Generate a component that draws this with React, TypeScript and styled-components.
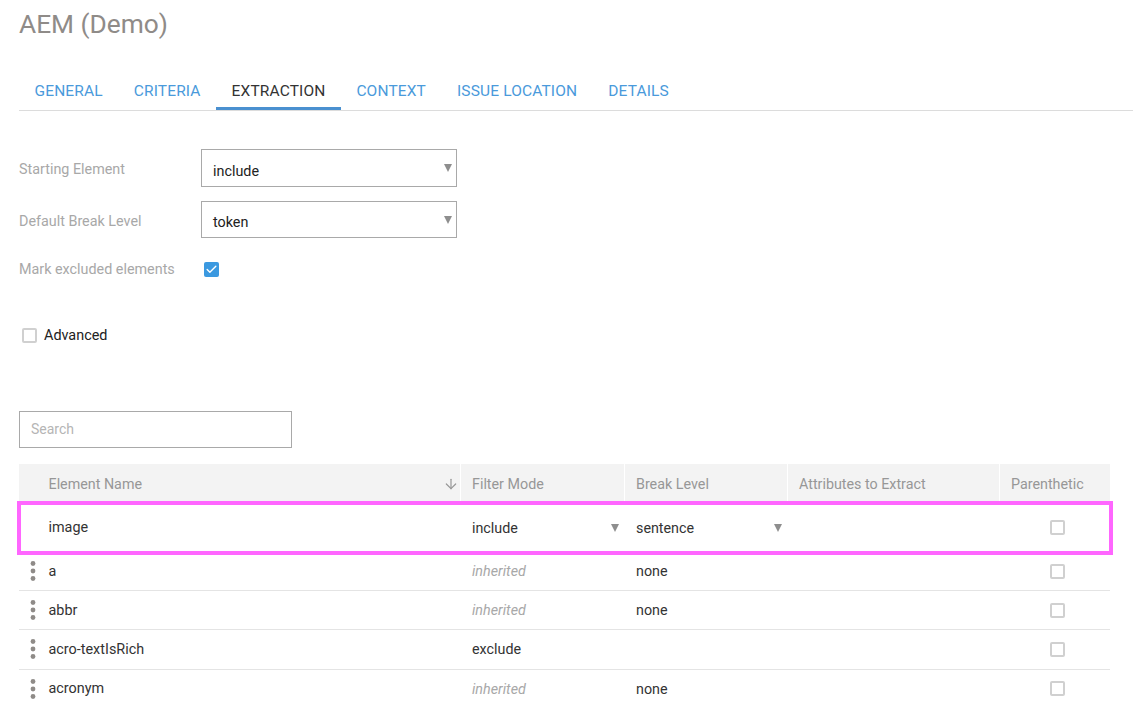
import React from "react";
import styled, { createGlobalStyle } from "styled-components";
import { ArrowDown, Check } from "lucide-react";

const GlobalStyle = createGlobalStyle`
  html, body {
    margin: 0;
    height: 100%;
    overflow: hidden;
    background: #fff;
    font-family: Roboto, "Liberation Sans", sans-serif;
  }
`;

const Page = styled.div`
  padding-left: 19px;
`;

const Title = styled.h1`
  margin: 0;
  height: 48px;
  line-height: 48px;
  font-size: 26.3px;
  font-weight: 400;
  color: #8f8b88;
`;

const Tabs = styled.div`
  display: flex;
  margin-top: 24px;
  height: 38px;
  border-bottom: 1px solid #dcdcdc;
`;

const Tab = styled.div<{ $active?: boolean }>`
  padding: 0 15.5px;
  height: 38px;
  line-height: 39px;
  box-sizing: border-box;
  font-size: 15.5px;
  letter-spacing: 0.14px;
  color: ${(p) => (p.$active ? "#333" : "#4a9adb")};
  border-bottom: 3px solid ${(p) => (p.$active ? "#4a90d0" : "transparent")};
`;

const Form = styled.div`
  display: flex;
  flex-direction: column;
  margin-top: 38px;
`;

const FormRow = styled.div<{ $h: number; $mt?: number }>`
  display: flex;
  align-items: center;
  height: ${(p) => p.$h}px;
  margin-top: ${(p) => p.$mt ?? 0}px;
`;

const Label = styled.div<{ $shift?: number }>`
  width: 182px;
  font-size: 14.35px;
  color: #a8a8a8;
  padding-top: ${(p) => p.$shift ?? 0}px;
  padding-bottom: ${(p) => (p.$shift ? 0 : 1)}px;
`;

const SelectBox = styled.div<{ $pad: number }>`
  position: relative;
  box-sizing: border-box;
  width: 256px;
  height: 100%;
  padding: ${(p) => p.$pad}px 11px 0;
  display: flex;
  align-items: center;
  font-size: 14.35px;
  color: #222;
  border: 1px solid #a9a9a9;
`;

const Caret = styled.span`
  position: absolute;
  right: 4px;
  top: 14px;
  width: 0;
  height: 0;
  border-left: 4.5px solid transparent;
  border-right: 4.5px solid transparent;
  border-top: 8px solid #8e8e8e;
`;

const InlineCaret = styled(Caret)`
  top: 50%;
  margin-top: -4px;
  right: 5px;
`;

const Box = styled.span<{ $checked?: boolean }>`
  box-sizing: border-box;
  display: inline-flex;
  align-items: center;
  justify-content: center;
  flex: none;
  width: 15px;
  height: 15px;
  border-radius: 2px;
  background: ${(p) => (p.$checked ? "#3b99e0" : "#fff")};
  border: ${(p) => (p.$checked ? "none" : "2px solid #d0d0d0")};
  color: #fff;
`;

const MarkCell = styled.div`
  padding-left: 3px;
  display: flex;
`;

const AdvancedRow = styled.div`
  display: flex;
  align-items: center;
  gap: 7px;
  margin-top: 48px;
  padding-left: 3px;
  height: 20px;
  font-size: 14.4px;
  color: #222;
`;

const Search = styled.input`
  display: block;
  box-sizing: border-box;
  width: 273px;
  height: 37px;
  margin-top: 66px;
  padding: 0 11px 2px;
  font: 14px Roboto, sans-serif;
  border: 1px solid #a9a9a9;
  border-radius: 0;
  outline: none;
  &::placeholder {
    color: #b5b5b5;
    opacity: 1;
  }
`;

const columns = "441px 164px 163px 212px 111px";

const Table = styled.div`
  width: 1091px;
  margin-top: 16px;
`;

const HeaderRow = styled.div`
  display: grid;
  grid-template-columns: ${columns};
  height: 39px;
  background: #f3f3f3;
`;

const HeadCell = styled.div<{ $first?: boolean }>`
  display: flex;
  align-items: center;
  justify-content: space-between;
  padding: 0 1px 0 ${(p) => (p.$first ? "29.5px" : "11px")};
  font-size: 14.3px;
  color: #979797;
  border-left: ${(p) => (p.$first ? "none" : "1px solid #fff")};
`;

const Row = styled.div<{ $highlight?: boolean }>`
  position: relative;
  display: grid;
  grid-template-columns: ${columns};
  height: ${(p) => (p.$highlight ? "49px" : "39.2px")};
  box-sizing: border-box;
  border-bottom: ${(p) => (p.$highlight ? "none" : "1px solid #e4e4e4")};
  ${(p) =>
    p.$highlight &&
    `&::after {
      content: "";
      position: absolute;
      inset: -2px -3px -3px -2px;
      border: 4px solid #ff66ff;
      pointer-events: none;
    }`}
`;

const NameCell = styled.div`
  display: flex;
  align-items: center;
  font-size: 14.4px;
  color: #333;
`;

const Handle = styled.div`
  width: 28px;
  margin-right: 1.5px;
  display: flex;
  justify-content: center;
  flex: none;
  color: #8f8b88;
`;

const Cell = styled.div<{ $inherited?: boolean }>`
  position: relative;
  display: flex;
  align-items: center;
  padding-left: 12px;
  font-size: 14.3px;
  font-style: ${(p) => (p.$inherited ? "italic" : "normal")};
  color: ${(p) => (p.$inherited ? "#a8a8a8" : "#333")};
`;

const CheckCell = styled.div`
  display: flex;
  align-items: center;
  padding-left: 51px;
`;

const Kebab = () => (
  <svg width="6" height="20" viewBox="0 0 6 20">
    <circle cx="3" cy="2.5" r="2.4" fill="currentColor" />
    <circle cx="3" cy="10" r="2.4" fill="currentColor" />
    <circle cx="3" cy="17.5" r="2.4" fill="currentColor" />
  </svg>
);

type Item = { name: string; filter: string; inherited?: boolean; level: string };

const items: Item[] = [
  { name: "a", filter: "inherited", inherited: true, level: "none" },
  { name: "abbr", filter: "inherited", inherited: true, level: "none" },
  { name: "acro-textIsRich", filter: "exclude", level: "" },
  { name: "acronym", filter: "inherited", inherited: true, level: "none" },
];

export default function App() {
  return (
    <Page>
      <GlobalStyle />
      <Title>AEM (Demo)</Title>
      <Tabs>
        <Tab>GENERAL</Tab>
        <Tab>CRITERIA</Tab>
        <Tab $active>EXTRACTION</Tab>
        <Tab>CONTEXT</Tab>
        <Tab>ISSUE LOCATION</Tab>
        <Tab>DETAILS</Tab>
      </Tabs>
      <Form>
        <FormRow $h={38}>
          <Label $shift={3}>Starting Element</Label>
          <SelectBox $pad={7}>
            include
            <Caret />
          </SelectBox>
        </FormRow>
        <FormRow $h={37} $mt={14}>
          <Label $shift={3}>Default Break Level</Label>
          <SelectBox $pad={5}>
            token
            <Caret />
          </SelectBox>
        </FormRow>
        <FormRow $h={15} $mt={24}>
          <Label>Mark excluded elements</Label>
          <MarkCell>
            <Box $checked>
              <Check size={13} strokeWidth={2.5} />
            </Box>
          </MarkCell>
        </FormRow>
      </Form>
      <AdvancedRow>
        <Box />
        Advanced
      </AdvancedRow>
      <Search placeholder="Search" />
      <Table>
        <HeaderRow>
          <HeadCell $first>
            Element Name
            <ArrowDown size={16} strokeWidth={1.8} />
          </HeadCell>
          <HeadCell>Filter Mode</HeadCell>
          <HeadCell>Break Level</HeadCell>
          <HeadCell>Attributes to Extract</HeadCell>
          <HeadCell>Parenthetic</HeadCell>
        </HeaderRow>
        <Row $highlight>
          <NameCell>
            <Handle />
            image
          </NameCell>
          <Cell>
            include
            <InlineCaret />
          </Cell>
          <Cell>
            sentence
            <InlineCaret />
          </Cell>
          <Cell />
          <CheckCell>
            <Box />
          </CheckCell>
        </Row>
        {items.map((item) => (
          <Row key={item.name}>
            <NameCell>
              <Handle>
                <Kebab />
              </Handle>
              {item.name}
            </NameCell>
            <Cell $inherited={item.inherited}>{item.filter}</Cell>
            <Cell>{item.level}</Cell>
            <Cell />
            <CheckCell>
              <Box />
            </CheckCell>
          </Row>
        ))}
      </Table>
    </Page>
  );
}
